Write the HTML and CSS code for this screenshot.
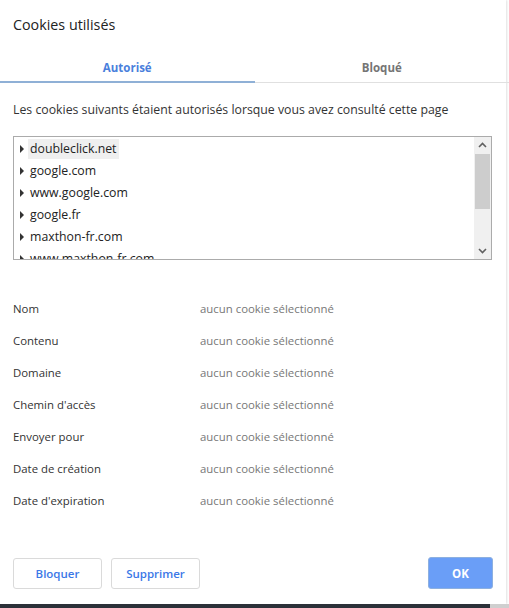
FILE: index.html
```html
<!DOCTYPE html>
<html lang="fr">
<head>
<meta charset="utf-8">
<link rel="stylesheet" href="styles.css">
</head>
<body>
<div class="dialog">
  <h1 class="title">Cookies utilisés</h1>
  <div class="tabs">
    <div class="tab active">Autorisé</div>
    <div class="tab">Bloqué</div>
  </div>
  <p class="desc">Les cookies suivants étaient autorisés lorsque vous avez consulté cette page</p>
  <div class="tree">
    <ul class="items">
      <li class="item selected"><span class="arrow"></span><span class="name">doubleclick.net</span></li>
      <li class="item"><span class="arrow"></span><span class="name">google.com</span></li>
      <li class="item"><span class="arrow"></span><span class="name">www.google.com</span></li>
      <li class="item"><span class="arrow"></span><span class="name">google.fr</span></li>
      <li class="item"><span class="arrow"></span><span class="name">maxthon-fr.com</span></li>
      <li class="item"><span class="arrow"></span><span class="name">www.maxthon-fr.com</span></li>
    </ul>
    <div class="scrollbar">
      <svg class="sb-arrow" width="17" height="17" viewBox="0 0 17 17"><path d="M5 10 L8.5 6.5 L12 10" fill="none" stroke="#606060" stroke-width="1.6"/></svg>
      <div class="sb-track"><div class="sb-thumb"></div></div>
      <svg class="sb-arrow" width="17" height="17" viewBox="0 0 17 17"><path d="M5 7 L8.5 10.5 L12 7" fill="none" stroke="#606060" stroke-width="1.6"/></svg>
    </div>
  </div>
  <dl class="details">
    <div class="row"><dt>Nom</dt><dd>aucun cookie sélectionné</dd></div>
    <div class="row"><dt>Contenu</dt><dd>aucun cookie sélectionné</dd></div>
    <div class="row"><dt>Domaine</dt><dd>aucun cookie sélectionné</dd></div>
    <div class="row"><dt>Chemin d'accès</dt><dd>aucun cookie sélectionné</dd></div>
    <div class="row"><dt>Envoyer pour</dt><dd>aucun cookie sélectionné</dd></div>
    <div class="row"><dt>Date de création</dt><dd>aucun cookie sélectionné</dd></div>
    <div class="row"><dt>Date d'expiration</dt><dd>aucun cookie sélectionné</dd></div>
  </dl>
  <div class="buttons">
    <button class="btn">Bloquer</button>
    <button class="btn">Supprimer</button>
    <span class="spacer"></span>
    <button class="btn primary">OK</button>
  </div>
</div>
<div class="under"><div class="under-dark"></div><div class="under-light"></div></div>
</body>
</html>
```
FILE: styles.css
```css
html, body {
  margin: 0;
  padding: 0;
}
body {
  width: 509px;
  height: 608px;
  overflow: hidden;
  background: #ffffff;
  font-family: "Open Sans", "Noto Sans", sans-serif;
  color: #333333;
}
.dialog {
  width: 506px;
  height: 604px;
  background: #ffffff;
  box-shadow: 1px 0 2px rgba(0,0,0,0.12);
  display: flex;
  flex-direction: column;
}
.title {
  margin: 0;
  padding: 15px 13px 0 13px;
  height: 30px;
  font-size: 14.3px;
  font-weight: normal;
  line-height: 20px;
  color: #222222;
}
.tabs {
  display: flex;
  width: 509px;
  margin-top: 12px;
  height: 26px;
}
.tab {
  flex: 1;
  text-align: center;
  font-size: 11.5px;
  font-weight: bold;
  color: #757575;
  line-height: 18px;
  padding-top: 2px;
  border-bottom: 1px solid #e0e0e0;
  box-sizing: border-box;
}
.tab.active {
  color: #4a7fdc;
  border-bottom: 2px solid #8fb0d6;
}
.desc {
  margin: 19px 13px 0 13px;
  font-size: 12.3px;
  line-height: 16px;
  color: #333333;
}
.tree {
  margin: 18px 14px 0 13px;
  height: 122px;
  border: 1px solid #ababab;
  display: flex;
  overflow: hidden;
}
.items {
  list-style: none;
  margin: 0;
  padding: 1px 0 0 0;
  flex: 1;
  overflow: hidden;
}
.item {
  display: flex;
  align-items: center;
  height: 22px;
  font-size: 12.3px;
  color: #222222;
}
.arrow {
  width: 0;
  height: 0;
  margin-left: 6px;
  margin-right: 4px;
  border-top: 4px solid transparent;
  border-bottom: 4px solid transparent;
  border-left: 4px solid #333333;
}
.name {
  padding: 2px;
  line-height: 16px;
}
.item.selected .name {
  background: #efefef;
}
.scrollbar {
  width: 17px;
  background: #f0f0f0;
  display: flex;
  flex-direction: column;
}
.sb-arrow {
  display: block;
  flex: none;
}
.sb-track {
  flex: 1;
  padding: 0 1px;
}
.sb-thumb {
  height: 55px;
  background: #cdcdcd;
}
.details {
  margin: 41px 0 0 13px;
  padding: 0;
  font-size: 11.4px;
}
.row {
  display: flex;
  height: 32px;
  line-height: 16px;
}
.row dt {
  width: 187px;
  color: #333333;
}
.row dd {
  margin: 0;
  color: #777777;
}
.buttons {
  display: flex;
  align-items: center;
  margin-top: 32px;
  padding: 0 13px;
  gap: 9px;
}
.spacer {
  flex: 1;
}
.btn {
  font-family: "Open Sans", "Noto Sans", sans-serif;
  font-size: 11.5px;
  font-weight: 600;
  height: 31px;
  width: 89px;
  border: 1px solid #dadada;
  border-radius: 3px;
  background: #ffffff;
  color: #3b78e7;
  padding: 0;
}
.btn.primary {
  width: 65px;
  height: 32px;
  background: #6a9ef7;
  border: 1px solid #8db0e0;
  color: #ffffff;
  font-weight: bold;
  margin-right: 0;
}
.under {
  display: flex;
  height: 4px;
}
.under-dark {
  width: 490px;
  background: #2b3038;
}
.under-light {
  flex: 1;
  background: #cfcfcf;
}
```
